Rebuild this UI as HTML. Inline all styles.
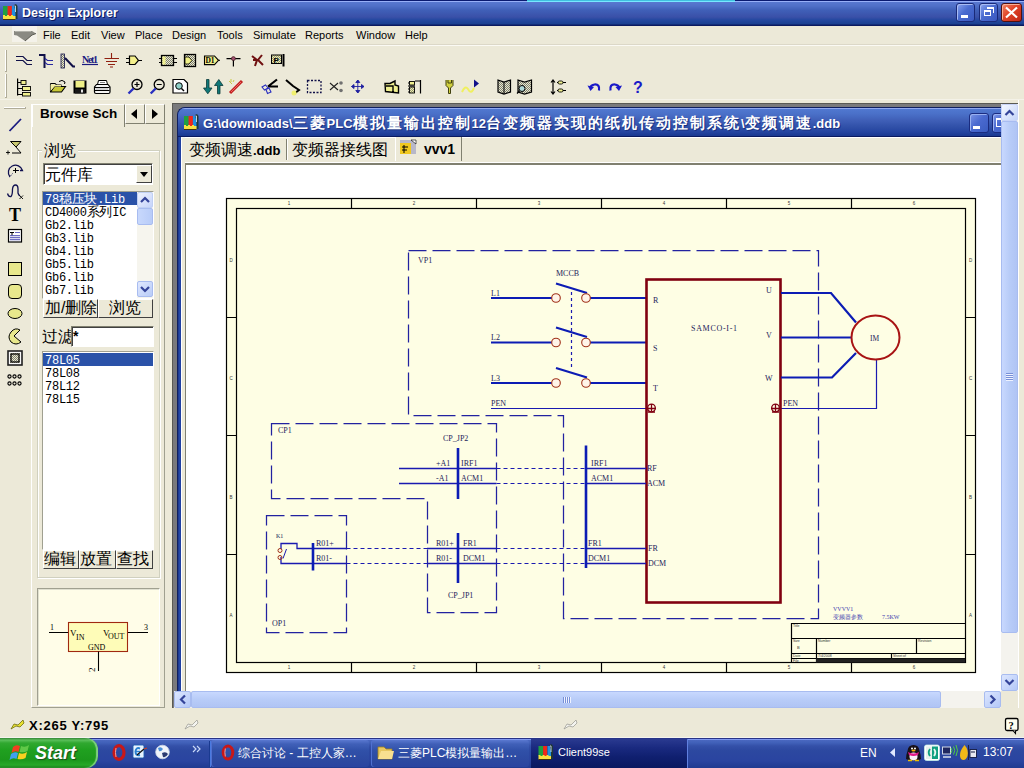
<!DOCTYPE html>
<html><head><meta charset="utf-8">
<style>
*{margin:0;padding:0;box-sizing:border-box}
html,body{width:1024px;height:768px;overflow:hidden;background:#ece9d8;font-family:"Liberation Sans",sans-serif;font-size:11px;color:#000}
.a{position:absolute}
#title{left:0;top:0;width:1024px;height:26px;background:linear-gradient(#0a1a70 0,#0a1a70 1px,#98b0f8 1px,#98b0f8 2px,#5878d0 2px,#5070c8 6px,#4060b8 10px,#3a50a8 17px,#2448a0 20px,#1a4090 24px,#0a1a60 25px,#0a1a60 26px)}
.mi{position:absolute;top:29px;font-size:11px;color:#000}
.cjk{font-family:"Liberation Sans",sans-serif}
.mono{font-family:"Liberation Mono",monospace}
</style></head><body>
<!-- title bar -->
<div id="title" class="a"></div>
<div class="a" style="left:527px;top:0;width:208px;height:2px;background:linear-gradient(#40c0e0 0,#40c0e0 1px,#78e8ff 1px)"></div>
<div class="a" style="left:22px;top:6px;color:#fff;font-size:12.5px;font-weight:bold;text-shadow:1px 1px #0a1860">Design Explorer</div>
<!-- menu -->
<div class="mi" style="left:43px">File</div>
<div class="mi" style="left:71px">Edit</div>
<div class="mi" style="left:101px">View</div>
<div class="mi" style="left:135px">Place</div>
<div class="mi" style="left:172px">Design</div>
<div class="mi" style="left:217px">Tools</div>
<div class="mi" style="left:253px">Simulate</div>
<div class="mi" style="left:305px">Reports</div>
<div class="mi" style="left:356px">Window</div>
<div class="mi" style="left:405px">Help</div>
<!-- ICONS -->
<svg class="a" style="left:0;top:0" width="1024" height="768">
<defs>
<pattern id="hat" width="2" height="2" patternUnits="userSpaceOnUse"><rect width="2" height="2" fill="#e8e8d0"/><rect width="1" height="1" fill="#808070"/><rect x="1" y="1" width="1" height="1" fill="#808070"/></pattern>
<pattern id="hat2" width="2" height="2" patternUnits="userSpaceOnUse"><rect width="2" height="2" fill="#f0f0a0"/><rect width="1" height="1" fill="#909080"/><rect x="1" y="1" width="1" height="1" fill="#909080"/></pattern>
</defs>
<!-- grips -->
<g stroke-width="1">
<path d="M5.5 50V71M5.5 74V97" stroke="#fff"/><path d="M6.5 50V71M6.5 74V97M5 71.5H7M5 97.5H7" stroke="#b0ac98"/>
<path d="M4 107.5H25" stroke="#fff"/><path d="M4 108.5H25M25.5 107V109" stroke="#b0ac98"/>
</g>
<!-- ROW 1 -->
<path d="M16 56.5H23L27 60.5H32M16 60.5H23L27 64.5H32" stroke="#101048" stroke-width="1.2" fill="none"/>
<path d="M39 55H44.5V68" stroke="#101048" stroke-width="2" fill="none"/>
<path d="M45 58.5L47.5 60.5H53M45 62.5L47.5 64.5H53" stroke="#2828a0" stroke-width="1.1" fill="none"/>
<rect x="61" y="54" width="3.5" height="14" fill="url(#hat)" stroke="#101048" stroke-width="0.8"/>
<path d="M65 58L73 66.5H75" stroke="#101048" stroke-width="2" fill="none"/>
<text x="82" y="63" font-family="Liberation Serif,serif" font-weight="bold" font-size="10" fill="#1a1a80" textLength="16">Net1</text>
<path d="M82 64.5H98" stroke="#1a1a80" stroke-width="1.2"/>
<path d="M111.5 53V58.5M104.5 58.5H119M106 61.5H117M108 64.5H115M110 67H113" stroke="#902010" stroke-width="1.1" fill="none"/>
<path d="M126 58.5H129.5M126 62.5H129.5M138.5 60.5H142" stroke="#000" stroke-width="1.1"/>
<path d="M129.5 56H135L138.5 60.5L135 64.5H129.5Z" fill="#f4f08c" stroke="#000" stroke-width="1.2"/>
<path d="M159 58.5H161M159 62.5H161M174 58.5H177M174 62.5H177" stroke="#000" stroke-width="1"/>
<rect x="161.5" y="55.5" width="12" height="10" fill="url(#hat)" stroke="#000" stroke-width="1.3"/>
<rect x="162.5" y="56.5" width="3" height="8" fill="#f0f090"/>
<rect x="184.5" y="54.5" width="11" height="12" fill="url(#hat)" stroke="#000" stroke-width="1.3"/>
<path d="M185 57H189L192 60.5L189 64H185Z" fill="#f0f088" stroke="#000" stroke-width="0.8"/>
<path d="M204.5 56H214.5L218.5 60.3L214.5 64.6H204.5Z" fill="#f4f08c" stroke="#000" stroke-width="1.1"/>
<path d="M218.5 60.3H220" stroke="#000"/>
<text x="205.5" y="63.3" font-family="Liberation Serif,serif" font-weight="bold" font-size="7.5" fill="#000" textLength="9">D1</text>
<path d="M226.5 58.6H240.5M233.4 58.6V66.5" stroke="#000" stroke-width="1.2"/>
<circle cx="233.4" cy="58.6" r="2" fill="#a05070" stroke="#301010" stroke-width="0.6"/>
<path d="M252 56L257 60L255 66M262 55L258 60L263 65M253 60H258" stroke="#701010" stroke-width="2" fill="none"/>
<rect x="271.5" y="55" width="10" height="8.5" fill="url(#hat2)" stroke="#000" stroke-width="1"/>
<text x="273.5" y="62.5" font-family="Liberation Sans,sans-serif" font-weight="bold" font-size="8" fill="#000">P</text>
<path d="M283.5 54V66.5" stroke="#000" stroke-width="2"/>
<!-- ROW 2 -->
<path d="M17.6 78.5V95.5M17.6 82.5H21M17.6 88.5H22M17.6 94.5H22" stroke="#000" stroke-width="1.2"/>
<rect x="21" y="80.5" width="5" height="4" fill="#f0f090" stroke="#000" stroke-width="0.9"/>
<rect x="22.5" y="86.5" width="8" height="4" fill="#f0f090" stroke="#000" stroke-width="0.9"/>
<rect x="22.5" y="92.5" width="8" height="3.5" fill="#f0f090" stroke="#000" stroke-width="0.9"/>
<path d="M50.5 83.5H55L56.5 85H61V87" fill="none" stroke="#000" stroke-width="1.1"/>
<path d="M50.5 83.5V92H61.5L65.5 86.5H54.5L50.5 92" fill="#c8c838" stroke="#000" stroke-width="1.1"/>
<path d="M50.5 84.5V91L54.5 86.5H61V85H56L55 84.5Z" fill="#f4f0a0"/>
<path d="M59 81.5Q62 79 65 82L64.5 84" fill="none" stroke="#000" stroke-width="1"/>
<rect x="73.5" y="80.5" width="13" height="13" fill="#000"/>
<rect x="75.5" y="81" width="9" height="6.5" fill="#f0f088"/>
<rect x="75" y="89" width="10" height="4.5" fill="#181818"/>
<rect x="81" y="89.5" width="2" height="3" fill="#e8e8e8"/>
<path d="M98.5 80.5H106.5L107.5 84.5H97.5Z" fill="#fff" stroke="#000" stroke-width="1"/>
<path d="M100 82.5H105" stroke="#606060" stroke-width="0.8"/>
<path d="M96.5 84.5H108L110 87V92Q110 93.5 108.5 93.5H96Q94.5 93.5 94.5 92V87Z" fill="#f4f4f4" stroke="#000" stroke-width="1.2"/>
<path d="M95 87.5H109.5M95 90.5H109.5" stroke="#000" stroke-width="1"/>
<path d="M96 89H108" stroke="#b0b0b0" stroke-width="1"/>
<g fill="none" stroke="#000" stroke-width="1.3">
<circle cx="137" cy="84.5" r="5"/><circle cx="159.2" cy="84.5" r="5"/>
</g>
<path d="M134.5 84.5H139.5M137 82V87M156.7 84.5H161.7" stroke="#000" stroke-width="1.2"/>
<path d="M133.5 88.5L128.5 93.5M155.7 88.5L150.7 93.5" stroke="#2a30c0" stroke-width="2.4"/>
<path d="M173 79.5H184L187.5 83V93H173Z" fill="#fff" stroke="#000" stroke-width="1.2"/>
<circle cx="179" cy="86" r="3.3" fill="#90d0c8" stroke="#000" stroke-width="1"/>
<path d="M181.5 88.5L184 91" stroke="#000" stroke-width="1.4"/>
<path d="M206.5 79.5H209V88H212L207.8 93.8L203.5 88H206.5Z" fill="#107878" stroke="#0a3a3a" stroke-width="0.8"/>
<path d="M217.5 93.8H220V85.5H223L218.8 79.5L214.5 85.5H217.5Z" fill="#107878" stroke="#0a3a3a" stroke-width="0.8"/>
<path d="M230 93L242 81" stroke="#c02020" stroke-width="3"/><path d="M231 92L241 82" stroke="#f06060" stroke-width="1"/>
<path d="M229 81L232 84M231 79V82M234 80L233 82" stroke="#c0c020" stroke-width="0.8"/>
<path d="M268 86.5L277 79.5M268 86.5H278" stroke="#000" stroke-width="2.2"/>
<path d="M262 87L265.5 85L268 88L264.5 90Z M266 89.5L269 88L271 92L267.5 93.5Z" fill="none" stroke="#2a30c0" stroke-width="1.1"/>
<path d="M286 80L293 86L299 90L295 93" fill="none" stroke="#000" stroke-width="2"/>
<circle cx="294" cy="93" r="2.5" fill="#f0f070"/>
<rect x="307.5" y="80.5" width="13.5" height="12" fill="none" stroke="#101048" stroke-width="1.3" stroke-dasharray="2 1.5"/>
<path d="M330 83L334 86.5L330 90M334 86.5L338 83M334 86.5L338 90" fill="none" stroke="#202020" stroke-width="1.1"/>
<circle cx="341" cy="83" r="1.8" fill="#707070"/><circle cx="341" cy="90.5" r="1.8" fill="#707070"/>
<path d="M351.5 86.5H364M357.8 80V93M351.5 86.5L354 84.5V88.5ZM364 86.5L361.5 84.5V88.5ZM357.8 80L355.8 82.5H359.8ZM357.8 93L355.8 90.5H359.8Z" fill="#2020a0" stroke="#2020a0" stroke-width="0.9"/>
<path d="M385 83.5H390L395 81V85L398.5 86V93L385.5 91.5ZM386 86H393V92" fill="#f0f090" stroke="#000" stroke-width="1.4"/>
<path d="M408 83H415M408 86H415M408 89H415M408 92H415M420.5 80V93.5M415 81H421" stroke="#000" stroke-width="1.2"/>
<rect x="409.5" y="81.5" width="5" height="3.5" fill="#f0f090" stroke="#000" stroke-width="0.9"/>
<rect x="409.5" y="87" width="5" height="6" fill="url(#hat2)" stroke="#000" stroke-width="0.9"/>
<path d="M446 80V85.5L448.5 88V93.5H450.5V88L453 85.5V80M448 80V83H451.5V80" fill="#d0d040" stroke="#404010" stroke-width="1"/>
<path d="M462 92Q465 85 468 89Q471 95 474 88" fill="none" stroke="#f0f060" stroke-width="2"/>
<path d="M474 79.5L479 83.5L474 87.5Z" fill="#10108a"/>
<path d="M498 80L504 82L510.5 80V92L504 94L498 92Z" fill="url(#hat)" stroke="#000" stroke-width="1.2"/>
<path d="M504 82V94" stroke="#000" stroke-width="1"/>
<path d="M518 80L524.5 82L531.5 80V92L524.5 94L518 92Z" fill="url(#hat)" stroke="#000" stroke-width="1.2"/>
<circle cx="522" cy="88.5" r="3" fill="#b0d8d8" stroke="#000" stroke-width="1"/>
<path d="M519.5 91L517 93.5" stroke="#000" stroke-width="1.3"/>
<path d="M553 80.5V93.5M551 82.5L553 80L555 82.5M551 91.5L553 94L555 91.5" fill="none" stroke="#000" stroke-width="1.2"/>
<path d="M557 82.5H566M557 90.5H566" stroke="#000" stroke-width="1"/>
<rect x="558" y="81" width="5" height="3" rx="1.5" fill="#f0f090" stroke="#000" stroke-width="0.9"/>
<rect x="558" y="89" width="5" height="3" rx="1.5" fill="#f0f090" stroke="#000" stroke-width="0.9"/>
<path d="M599 90.5Q600 84 594.5 84.5Q591 85 590 88" fill="none" stroke="#1a1ac8" stroke-width="2.2"/>
<path d="M587.5 85.5L590.5 91L594 87Z" fill="#1a1ac8"/>
<path d="M610.5 90.5Q609.5 84 615 84.5Q618.5 85 619.5 88" fill="none" stroke="#1a1ac8" stroke-width="2.2"/>
<path d="M622 85.5L619 91L615.5 87Z" fill="#1a1ac8"/>
<text x="633" y="93" font-family="Liberation Sans,sans-serif" font-weight="bold" font-size="16" fill="#1a1ac8">?</text>
<!-- LEFT TOOLBAR -->
<path d="M9.5 131L21 119" stroke="#1a1a80" stroke-width="1.8"/>
<path d="M10.5 141.5H21L16 147Z" fill="#c8c870" stroke="#000" stroke-width="1"/>
<path d="M16 147L21 153H12" fill="none" stroke="#000" stroke-width="1"/>
<path d="M6 152.5H10M8 150.5V154.5" stroke="#000" stroke-width="0.9"/>
<path d="M10 177A7.2 7.2 0 1 1 22.5 170.5H20" fill="none" stroke="#101050" stroke-width="1.3"/>
<path d="M12.5 173.5L10.5 176M19 170.5H17.5" fill="none" stroke="#101050" stroke-width="1" stroke-dasharray="1 1"/>
<path d="M13 170.5H18M15.5 168V173" stroke="#000" stroke-width="1"/>
<path d="M7.5 193.5Q8.5 197 11 196.5Q12.5 195 12.5 189Q13 185 15.5 185Q18 185 18 189V193Q18.5 195 20 196" fill="none" stroke="#101050" stroke-width="1.3"/>
<path d="M19.5 195.5L23 199M23 195.5L19.5 199" stroke="#000" stroke-width="0.9"/>
<text x="9" y="220.5" font-family="Liberation Serif,serif" font-weight="bold" font-size="18" fill="#000">T</text>
<rect x="8.5" y="229.5" width="13" height="12.5" fill="#fff" stroke="#000" stroke-width="1.2"/>
<path d="M10 232.5H14M12 232V236" stroke="#000" stroke-width="1"/>
<path d="M15 232.5H20M10 235.5H20M10 237.5H20M10 239.5H20" stroke="#4040b0" stroke-width="0.8"/>
<path d="M11 235V241M13 235V241M15 235V241M17 235V241M19 235V241" stroke="#8080c8" stroke-width="0.6"/>
<rect x="8.5" y="262.5" width="13" height="13" fill="#e8e88c" stroke="#000" stroke-width="1"/>
<rect x="8.5" y="284.5" width="13" height="14" rx="3.5" fill="#e8e88c" stroke="#000" stroke-width="1"/>
<ellipse cx="15" cy="313.5" rx="7" ry="5" fill="#e8e88c" stroke="#000" stroke-width="1"/>
<path d="M21 342Q16 346 11 342Q7 337 11 332Q15 327 20 330L14 336Z" fill="#e8e88c" stroke="#000" stroke-width="1"/>
<rect x="8" y="351" width="14" height="14" fill="#f8f8f8" stroke="#202020" stroke-width="1.6"/>
<rect x="10" y="353" width="10" height="10" fill="url(#hat)"/>
<rect x="11" y="354" width="8" height="8" fill="none" stroke="#000" stroke-width="1.2"/>
<g fill="none" stroke="#000" stroke-width="1.1">
<circle cx="9.5" cy="376.5" r="1.6"/><circle cx="14.5" cy="376.5" r="1.6"/><circle cx="19.5" cy="376.5" r="1.6"/>
<circle cx="9.5" cy="383.5" r="1.6"/><circle cx="14.5" cy="383.5" r="1.6"/><circle cx="19.5" cy="383.5" r="1.6"/>
</g>
<!-- menu system icon -->
<rect x="12" y="26" width="25" height="16" fill="#f4f2ea"/>
<path d="M14 31H32L36 33.5L32 35L25 41L17 35.5L14 35Z" fill="#8a8a82"/>
<path d="M15 31.5H31" stroke="#b0b0a8" stroke-width="1"/>
<path d="M25 41L32 35L36 33.5" fill="none" stroke="#5a5a52" stroke-width="1"/>
</svg>

<!-- toolbar separators -->
<div class="a" style="left:0;top:44px;width:1024px;height:1px;background:#dcd8c8"></div><div class="a" style="left:0;top:45px;width:1024px;height:1px;background:#fbfaf4"></div><div class="a" style="left:0;top:99px;width:1024px;height:1px;background:#f4f2e8"></div>

<!-- left vertical toolbar grip -->

<!-- left panel -->
<div class="a" style="left:31px;top:104px;width:134px;height:604px;border:1px solid #fff;border-right-color:#a0a090;border-bottom-color:#a0a090"></div>
<div class="a" style="left:32px;top:104px;width:93px;height:23px;border-left:1px solid #fff;border-top:1px solid #fff;border-right:1px solid #808070;background:#ece9d8"></div>
<div class="a" style="left:40px;top:106px;font-size:13.5px;font-weight:bold">Browse Sch</div>
<div class="a" style="left:125px;top:104px;width:20px;height:20px;border:1px solid #fff;border-right-color:#808070;border-bottom-color:#808070;background:#ece9d8"></div>
<div class="a" style="left:145px;top:104px;width:20px;height:20px;border:1px solid #fff;border-right-color:#808070;border-bottom-color:#808070;background:#ece9d8"></div>
<svg class="a" style="left:0;top:0" width="1024" height="768">
<path d="M131 114 L137 109 L137 119 Z" fill="#000"/>
<path d="M158 114 L152 109 L152 119 Z" fill="#000"/>
</svg>
<!-- group box -->
<div class="a" style="left:37px;top:150px;width:123px;height:428px;border:1px solid #d0d0bf;box-shadow:inset 1px 1px #fff,1px 1px #fff"></div>
<div class="a cjk" style="left:42px;top:141px;padding:0 2px;background:#ece9d8;font-size:16px">浏览</div>
<!-- combo -->
<div class="a" style="left:43px;top:163px;width:110px;height:22px;background:#fff;border:1px solid #808070;border-right-color:#fff;border-bottom-color:#fff;box-shadow:inset 1px 1px #404040"></div>
<div class="a cjk" style="left:45px;top:165px;font-size:16px">元件库</div>
<div class="a" style="left:136px;top:165px;width:16px;height:18px;background:#ece9d8;border:1px solid #fff;border-right-color:#404040;border-bottom-color:#404040"></div>
<svg class="a" style="left:0;top:0" width="1024" height="768"><path d="M140 172 L148 172 L144 177 Z" fill="#000"/></svg>
<!-- lib list -->
<div class="a" style="left:42px;top:191px;width:112px;height:108px;background:#fff;border:1px solid #a0a090;border-right-color:#fff;border-bottom-color:#fff"></div>
<div class="a" style="left:43px;top:192px;width:94px;height:13px;background:#2a52a8"></div>
<div class="a mono" style="left:45px;top:194px;font-size:12px;line-height:13px;letter-spacing:-0.25px;color:#000;white-space:nowrap">
<span style="color:#fff">78<span style="font-size:12.5px">稳压块</span>.Lib</span><br>CD4000<span style="font-size:12.5px">系列</span>IC<br>Gb2.lib<br>Gb3.lib<br>Gb4.lib<br>Gb5.lib<br>Gb6.lib<br>Gb7.lib</div>
<div class="a" style="left:137px;top:192px;width:16px;height:106px;background:#f6f5ee"></div>
<div class="a" style="left:137px;top:192px;width:16px;height:16px;background:linear-gradient(135deg,#eef2fe,#c6d4fa);border:1px solid #c0d0f4;border-radius:2px"></div>
<div class="a" style="left:137px;top:208px;width:16px;height:17px;background:linear-gradient(90deg,#c8d8fc,#b8ccf8);border:1px solid #a8bcf0;border-radius:2px"></div>
<div class="a" style="left:137px;top:281px;width:16px;height:16px;background:linear-gradient(135deg,#e0e8fe,#b8ccf8);border:1px solid #a8bcf0;border-radius:2px"></div>
<svg class="a" style="left:0;top:0" width="1024" height="768">
<path d="M141 202 L145 198 L149 202" stroke="#34449a" stroke-width="2.2" fill="none"/>
<path d="M141 287 L145 291 L149 287" stroke="#34449a" stroke-width="2.2" fill="none"/>
</svg>
<!-- add/browse buttons -->
<div class="a" style="left:43px;top:299px;width:55px;height:19px;background:#ece9d8;border:1px solid #fff;border-right-color:#404040;border-bottom-color:#404040"></div>
<div class="a" style="left:98px;top:299px;width:55px;height:19px;background:#ece9d8;border:1px solid #fff;border-right-color:#404040;border-bottom-color:#404040"></div>
<div class="a cjk" style="left:45px;top:299px;font-size:16px;line-height:18px">加/删除</div>
<div class="a cjk" style="left:109px;top:299px;font-size:16px;line-height:18px">浏览</div>
<!-- filter -->
<div class="a cjk" style="left:42px;top:327px;font-size:16px">过滤</div>
<div class="a" style="left:71px;top:326px;width:83px;height:21px;background:#fff;border:1px solid #808070;border-right-color:#fff;border-bottom-color:#fff;box-shadow:inset 1px 1px #404040"></div>
<div class="a" style="left:73px;top:328px;font-size:14px;font-weight:bold">*</div>
<!-- comp list -->
<div class="a" style="left:42px;top:351px;width:112px;height:199px;background:#fff;border:1px solid #a0a090;border-right-color:#fff;border-bottom-color:#fff"></div>
<div class="a" style="left:43px;top:353px;width:110px;height:13px;background:#2a52a8"></div>
<div class="a mono" style="left:45px;top:355px;font-size:12px;line-height:13px;letter-spacing:-0.25px;color:#000"><span style="color:#fff">78L05</span><br>78L08<br>78L12<br>78L15</div>
<!-- edit/place/find -->
<div class="a" style="left:43px;top:550px;width:36px;height:19px;background:#ece9d8;border:1px solid #fff;border-right-color:#404040;border-bottom-color:#404040"></div>
<div class="a" style="left:79px;top:550px;width:37px;height:19px;background:#ece9d8;border:1px solid #fff;border-right-color:#404040;border-bottom-color:#404040"></div>
<div class="a" style="left:116px;top:550px;width:37px;height:19px;background:#ece9d8;border:1px solid #fff;border-right-color:#404040;border-bottom-color:#404040"></div>
<div class="a cjk" style="left:44px;top:550px;font-size:16px;line-height:18px">编辑</div>
<div class="a cjk" style="left:80px;top:550px;font-size:16px;line-height:18px">放置</div>
<div class="a cjk" style="left:117px;top:550px;font-size:16px;line-height:18px">查找</div>
<!-- preview -->
<div class="a" style="left:37px;top:588px;width:123px;height:118px;background:#fffde8;border:1px solid #a0a090;border-right-color:#fff;border-bottom-color:#fff;box-shadow:inset 1px 1px #e0e0d0"></div>

<!-- preview component -->
<svg class="a" style="left:0;top:0" width="1024" height="768" font-family="Liberation Serif,serif">
<rect x="68.5" y="622.5" width="59" height="29" fill="#fefcb8" stroke="#a02810" stroke-width="1.1"/>
<path d="M49 632.5H68M128 632.5H148M98.5 651.5V671" stroke="#000" stroke-width="1.1"/>
<g font-size="8" fill="#000">
<text x="50" y="630">1</text><text x="144" y="630">3</text>
<text x="70" y="636" font-size="9">V</text><text x="76" y="640" font-size="8">IN</text>
<text x="103" y="636" font-size="9">V</text><text x="108" y="639" font-size="8">OUT</text>
<text x="88" y="649.5" font-size="8">GND</text>
<text x="95" y="672" transform="rotate(-90 95 672)" font-size="9">2</text>
</g>
</svg>
<!-- MDI client -->
<div class="a" style="left:172px;top:103px;width:846px;height:605px;background:#7a7a7c;border-top:1px solid #5a5a54;border-left:1px solid #5a5a54"></div>
<!-- child window -->
<div class="a" style="left:177px;top:107px;width:824px;height:584px;background:#1e3c9c;border-radius:8px 0 0 0;border-left:1px solid #102060;border-top:1px solid #102060"></div>
<div class="a" style="left:178px;top:108px;width:823px;height:29px;border-radius:7px 0 0 0;background:linear-gradient(#90a8f0 0,#90a8f0 1px,#5078d0 1px,#4a70c8 6px,#4060b8 12px,#3050a8 19px,#2444a0 24px,#1a3890 28px,#0a1a60 28px)"></div>
<div class="a" style="left:178px;top:137px;width:3px;height:554px;background:linear-gradient(90deg,#1a3488,#2448a8 50%,#1e3c9c)"></div>
<div class="a" style="left:181px;top:137px;width:820px;height:554px;background:#ece9d8;border-left:1px solid #fff;border-top:1px solid #f4f4f8"></div>
<div class="a" style="left:203px;top:114px;color:#fff;font-size:13px;font-weight:bold;white-space:nowrap;text-shadow:1px 1px #1a3080">G:\downloads\<span style="font-size:15px;letter-spacing:2px">三菱</span>PLC<span style="font-size:15px;letter-spacing:2px">模拟量输出控制</span>12<span style="font-size:15px;letter-spacing:2px">台变频器实现的纸机传动控制系统</span>\<span style="font-size:15px;letter-spacing:2px">变频调速</span>.ddb</div>
<!-- tabs -->
<div class="a" style="left:185px;top:137px;width:816px;height:1px;background:#fff"></div>
<div class="a cjk" style="left:189px;top:140px;font-size:16px;white-space:nowrap">变频调速<b style="font-size:13px">.ddb</b></div>
<div class="a" style="left:286px;top:139px;width:2px;height:21px;border-left:1px solid #808070;border-right:1px solid #fff"></div>
<div class="a cjk" style="left:292px;top:140px;font-size:16px;white-space:nowrap">变频器接线图</div>
<div class="a" style="left:395px;top:137px;width:67px;height:24px;border-left:1px solid #fff;border-right:1px solid #808070;background:#ece9d8"></div>
<div class="a" style="left:424px;top:141px;font-size:14px;font-weight:bold">vvv1</div>
<div class="a" style="left:185px;top:162px;width:816px;height:3px;border-top:1px solid #fff;border-bottom:2px solid #808070"></div>
<!-- document white area -->
<div class="a" style="left:185px;top:165px;width:816px;height:526px;background:#fff;border-left:1px solid #808070"></div>

<!-- SCHEM -->
<svg class="a" style="left:0;top:0" width="1024" height="768" font-family="Liberation Serif,serif">
<!-- sheet -->
<rect x="226.5" y="198.5" width="749" height="474" fill="#fefee4" stroke="#000" stroke-width="1.2"/>
<rect x="236.5" y="208.5" width="729" height="454" fill="none" stroke="#000" stroke-width="1.2"/>
<g stroke="#000" stroke-width="1.2">
<path d="M351.5 198.5V208.5M476.5 198.5V208.5M601.5 198.5V208.5M726.5 198.5V208.5M851.5 198.5V208.5"/>
<path d="M351.5 662.5V672.5M476.5 662.5V672.5M601.5 662.5V672.5M726.5 662.5V672.5M851.5 662.5V672.5"/>
<path d="M226.5 317.5H236.5M226.5 435.5H236.5M226.5 554.5H236.5M965.5 317.5H975.5M965.5 435.5H975.5M965.5 554.5H975.5"/>
</g>
<g font-size="4.5" fill="#333" font-family="Liberation Sans,sans-serif" text-anchor="middle">
<text x="289" y="205">1</text><text x="414" y="205">2</text><text x="539" y="205">3</text><text x="664" y="205">4</text><text x="789" y="205">5</text><text x="914" y="205">6</text>
<text x="289" y="669">1</text><text x="414" y="669">2</text><text x="539" y="669">3</text><text x="664" y="669">4</text><text x="789" y="669">5</text><text x="914" y="669">6</text>
<text x="231" y="262">D</text><text x="231" y="380">C</text><text x="231" y="499">B</text><text x="231" y="617">A</text>
<text x="970.5" y="262">D</text><text x="970.5" y="380">C</text><text x="970.5" y="499">B</text><text x="970.5" y="617">A</text>
</g>
<!-- dashed boxes -->
<g fill="none" stroke="#2222a0" stroke-width="1.25" stroke-dasharray="18 6">
<path d="M408.5 250.5H818.5V618.5H563.5V415.5H408.5Z"/>
<path d="M271.5 423.5H496.5V612.5H427.5V498.5H271.5Z"/>
<path d="M266.5 515.5H346.5V632.5H266.5Z"/>
</g>
<!-- MCCB -->
<g stroke="#0c1cb4" stroke-width="2.2" fill="none">
<path d="M491 298H552M590 298H646M491 342.5H552M590 342.5H646M491 383H552M590 383H646"/>
<path d="M556 283.5L587 293M556 327.5L587 337M556 368L587 377.5"/>
</g>
<path d="M571.5 292V370" stroke="#1a1ab0" stroke-width="1.2" stroke-dasharray="3 3"/>
<g stroke="#a03018" stroke-width="1.1" fill="#fff4e8">
<circle cx="556" cy="298" r="4.3"/><circle cx="586" cy="298" r="4.3"/>
<circle cx="556" cy="342.5" r="4.3"/><circle cx="586" cy="342.5" r="4.3"/>
<circle cx="556" cy="383" r="4.3"/><circle cx="586" cy="383" r="4.3"/>
</g>
<path d="M491 408.5H646M781 408.5H876.5V360" stroke="#1a1ab0" stroke-width="1.2" fill="none"/>
<!-- inverter box -->
<rect x="646.5" y="279.5" width="134" height="323" fill="none" stroke="#800010" stroke-width="2.6"/>
<!-- motor -->
<g stroke="#0c1cb4" stroke-width="2.2" fill="none">
<path d="M781 293H831L856 322.5M781 337.5H852M781 377.5H832L856 353"/>
</g>
<ellipse cx="875.5" cy="337.5" rx="24" ry="22" fill="none" stroke="#a81414" stroke-width="2"/>
<!-- ground marks -->
<g stroke="#800010" stroke-width="1.3" fill="none">
<path d="M647 408.5H656M651.5 404V411M648 412H655"/><circle cx="651.5" cy="408" r="3.8"/>
<path d="M771 408.5H780M775.5 404V411M772 412H779"/><circle cx="775.5" cy="408" r="3.8"/>
</g>
<!-- CP section wires -->
<g stroke="#1a1ab0" stroke-width="1.3" fill="none">
<path d="M399 468.5H496.5M586 468.5H646M399 483.5H496.5M586 483.5H646"/>
<path d="M427 548.5H496.5M586 548.5H646M427 563.5H496.5M586 563.5H646"/>
<path d="M281 549V543.5H297V548.5H346.5M281 557V563.5H346.5"/>
</g>
<g stroke="#1a1ab0" stroke-width="1.2" fill="none" stroke-dasharray="4 3">
<path d="M496.5 468.5H586M496.5 483.5H586M496.5 548.5H586M496.5 563.5H586M346.5 548.5H427M346.5 563.5H427"/>
</g>
<g stroke="#0c1cb4" stroke-width="2.6">
<path d="M458 448V499M458 533V583M586 445.5V568M313 543V570.5"/>
</g>
<g stroke="#a03018" stroke-width="1" fill="none">
<circle cx="280" cy="550.5" r="2"/><circle cx="280" cy="557.5" r="2"/>
</g>
<path d="M286.5 549L283 558.5" stroke="#1a1ab0" stroke-width="1"/>
<!-- labels -->
<g font-size="8" fill="#1c1c5a">
<text x="418" y="263">VP1</text>
<text x="556" y="276">MCCB</text>
<text x="491" y="295.5">L1</text><text x="491" y="340">L2</text><text x="491" y="380.5">L3</text><text x="491" y="405.5">PEN</text>
<text x="653" y="302.5">R</text><text x="653" y="350.5">S</text><text x="653" y="390.5">T</text>
<text x="766" y="293">U</text><text x="766" y="337.5">V</text><text x="765" y="380.5">W</text>
<text x="691" y="331" textLength="46">SAMCO-I-1</text>
<text x="870" y="341" font-size="7.5">IM</text>
<text x="783" y="405.5">PEN</text>
<text x="278" y="432.5">CP1</text>
<text x="443" y="441">CP_JP2</text>
<text x="436" y="465.5">+A1</text><text x="461" y="465.5">IRF1</text>
<text x="436" y="480.5">-A1</text><text x="461" y="480.5">ACM1</text>
<text x="276" y="538" font-size="6">K1</text>
<text x="316" y="545.5">R01+</text><text x="316" y="561">R01-</text>
<text x="436" y="546">R01+</text><text x="463" y="546">FR1</text>
<text x="436" y="561">R01-</text><text x="463" y="561">DCM1</text>
<text x="448" y="598">CP_JP1</text>
<text x="591" y="466">IRF1</text><text x="591" y="481">ACM1</text>
<text x="588" y="546">FR1</text><text x="588" y="561">DCM1</text>
<text x="647" y="471">RF</text><text x="647" y="486">ACM</text>
<text x="648" y="551">FR</text><text x="648" y="566">DCM</text>
<text x="272" y="626">OP1</text>
</g>
<!-- title block -->
<g stroke="#000" stroke-width="1.2" fill="none">
<path d="M791.5 662.5V623.5H965.5M791.5 638.5H965.5M791.5 653.5H965.5M791.5 658.5H965.5M816.5 638.5V662.5M916.5 638.5V653.5M891.5 653.5V658.5"/>
</g>
<rect x="816" y="658.5" width="149" height="4" fill="#222"/>
<g font-size="3.5" fill="#333" font-family="Liberation Sans,sans-serif">
<text x="793" y="627">Title</text><text x="793" y="642">Size</text><text x="818" y="642">Number</text><text x="918" y="642">Revision</text>
<text x="793" y="657">Date</text><text x="818" y="657">7/4/2008</text><text x="893" y="657">Sheet of</text><text x="793" y="661.5">File</text>
<text x="797" y="649" font-size="4">B</text>
</g>
<text x="833" y="611" font-size="6" fill="#4040b0">VVVV1</text>
<text x="833" y="619" font-size="6" fill="#4040b0">变频器参数</text>
<text x="882" y="619" font-size="6" fill="#4040b0">7.5KW</text>
</svg>

<!-- app icon -->
<svg class="a" style="left:0;top:0" width="1024" height="768">
<g transform="translate(0 0)">
<rect x="3" y="6" width="4.6" height="10" fill="#20a040"/>
<rect x="7.6" y="6" width="4.2" height="10" fill="#f02818"/>
<rect x="12" y="6" width="3.5" height="10" fill="#2090e0"/>
<path d="M14 5L16 4L17.5 6V19H15.5V7Z" fill="#203838"/>
<path d="M14.5 6H15.5V12" stroke="#e8f8ff" stroke-width="0.8"/>
<path d="M3 15H5V16H7V15H9V16H11V15H13V16H15.5V19.5H3Z" fill="#f8e040"/>
<path d="M3 19.5H15.5" stroke="#403010" stroke-width="1"/>
</g>
<!-- child icon -->
<g transform="translate(181 110)">
<rect x="3" y="6" width="4.6" height="10" fill="#20a040"/>
<rect x="7.6" y="6" width="4.2" height="10" fill="#f02818"/>
<rect x="12" y="6" width="3.5" height="10" fill="#2090e0"/>
<path d="M14 5L16 4L17.5 6V19H15.5V7Z" fill="#203838"/>
<path d="M14.5 6H15.5V12" stroke="#e8f8ff" stroke-width="0.8"/>
<path d="M3 15H5V16H7V15H9V16H11V15H13V16H15.5V19.5H3Z" fill="#f8e040"/>
<path d="M3 19.5H15.5" stroke="#403010" stroke-width="1"/>
</g>
<!-- tab icon -->
<rect x="400" y="140" width="16" height="14" fill="#b8b8c8"/>
<rect x="400" y="143" width="11" height="11" fill="#f0c820"/>
<path d="M402 147H408M402 150H407M404 145V153" stroke="#000" stroke-width="1"/>
<path d="M411 140L416 144V140Z" fill="#fff" stroke="#000" stroke-width="0.6"/>
</svg>
<!-- main window buttons -->
<div class="a" style="left:956px;top:3px;width:19px;height:19px;border:1px solid #1a2a78;border-radius:3px;background:linear-gradient(135deg,#8aa4f0,#4a6cd0 45%,#3a58c0);box-shadow:inset 1px 1px #a8bcf4"></div>
<div class="a" style="left:961px;top:15px;width:7px;height:3px;background:#fff"></div>
<div class="a" style="left:979px;top:3px;width:19px;height:19px;border:1px solid #1a2a78;border-radius:3px;background:linear-gradient(135deg,#8aa4f0,#4a6cd0 45%,#3a58c0);box-shadow:inset 1px 1px #a8bcf4"></div>
<div class="a" style="left:984px;top:10px;width:7px;height:6px;border:1px solid #fff;border-top-width:2px"></div>
<div class="a" style="left:987px;top:7px;width:7px;height:6px;border:1px solid #fff;border-top-width:2px;border-left:0;border-bottom:0"></div>
<div class="a" style="left:1001px;top:3px;width:21px;height:19px;border:1px solid #501010;border-radius:3px;background:linear-gradient(135deg,#f08868,#e04428 45%,#c02818);box-shadow:inset 1px 1px #f8b098"></div>
<svg class="a" style="left:0;top:0" width="1024" height="768"><path d="M1006 7.5L1017 17.5M1017 7.5L1006 17.5" stroke="#fff" stroke-width="2.2"/></svg>
<!-- child window buttons -->
<div class="a" style="left:969px;top:113px;width:20px;height:20px;border:1px solid #1a2c80;border-radius:3px;background:linear-gradient(135deg,#7a94e4,#4a6ad0 45%,#3a5cc0);box-shadow:inset 1px 1px #98b0f0"></div>
<div class="a" style="left:973px;top:126px;width:7px;height:3px;background:#fff"></div>
<div class="a" style="left:992px;top:113px;width:20px;height:20px;border:1px solid #1a2c80;border-radius:3px;background:linear-gradient(135deg,#7a94e4,#4a6ad0 45%,#3a5cc0);box-shadow:inset 1px 1px #98b0f0"></div>
<div class="a" style="left:996px;top:118px;width:9px;height:9px;border:1px solid #fff;border-top-width:2px"></div>

<!-- vertical scrollbar -->
<div class="a" style="left:1001px;top:104px;width:17px;height:587px;background:#f4f3ee"></div>
<!-- horizontal scrollbar -->
<div class="a" style="left:174px;top:691px;width:844px;height:17px;background:#f4f3ee"></div>
<!-- v scrollbar parts -->
<div class="a" style="left:1001px;top:104px;width:17px;height:17px;border:1px solid #c8d4f8;border-radius:2px;background:linear-gradient(135deg,#f4f8ff,#c4d4fa)"></div>
<div class="a" style="left:1001px;top:121px;width:17px;height:512px;border:1px solid #a8bcf0;border-radius:2px;background:linear-gradient(90deg,#c8d8fe,#b8ccf8 50%,#b0c4f4)"></div>
<div class="a" style="left:1001px;top:674px;width:17px;height:17px;border:1px solid #a8bcf0;border-radius:2px;background:linear-gradient(135deg,#dce6fe,#b4c8f8)"></div>
<!-- h scrollbar parts -->
<div class="a" style="left:174px;top:691px;width:17px;height:17px;border:1px solid #a8bcf0;border-radius:2px;background:linear-gradient(135deg,#dce6fe,#b4c8f8)"></div>
<div class="a" style="left:191px;top:691px;width:750px;height:17px;border:1px solid #a8bcf0;border-radius:2px;background:linear-gradient(#c8d8fe,#b8ccf8 50%,#b0c4f4)"></div>
<div class="a" style="left:984px;top:691px;width:17px;height:17px;border:1px solid #a8bcf0;border-radius:2px;background:linear-gradient(135deg,#dce6fe,#b4c8f8)"></div>
<div class="a" style="left:1001px;top:691px;width:17px;height:17px;background:#ece9d8"></div>
<svg class="a" style="left:0;top:0" width="1024" height="768">
<path d="M1005.5 115L1009.5 111L1013.5 115" stroke="#34449a" stroke-width="2.2" fill="none"/>
<path d="M1005.5 680L1009.5 684L1013.5 680" stroke="#34449a" stroke-width="2.2" fill="none"/>
<path d="M185 695.5L181 699.5L185 703.5" stroke="#34449a" stroke-width="2.2" fill="none"/>
<path d="M990.5 695.5L994.5 699.5L990.5 703.5" stroke="#34449a" stroke-width="2.2" fill="none"/>
<path d="M563.5 697V703M565.5 697V703M567.5 697V703M569.5 697V703" stroke="#7890d8" stroke-width="1"/><path d="M564.5 697V703M566.5 697V703M568.5 697V703M570.5 697V703" stroke="#eef2ff" stroke-width="1"/>
<path d="M1006 373.5H1013M1006 375.5H1013M1006 377.5H1013M1006 379.5H1013" stroke="#7890d8" stroke-width="1"/><path d="M1006 374.5H1013M1006 376.5H1013M1006 378.5H1013M1006 380.5H1013" stroke="#eef2ff" stroke-width="1"/>
</svg>
<div class="a" style="left:1018px;top:100px;width:6px;height:608px;background:#ece9d8;border-left:1px solid #fff"></div>
<!-- status bar -->
<svg class="a" style="left:0;top:0" width="1024" height="768">
<path d="M11 729L14 724L18 725L23 720L24 723L20 727L16 726Z" fill="#e8e030" stroke="#707010" stroke-width="0.8"/>
<path d="M185 729L188 724L192 725L197 720L198 723L194 727L190 726Z" fill="#f4f4f0" stroke="#a0a098" stroke-width="0.8"/>
<path d="M564 729L567 724L571 725L576 720L577 723L573 727L569 726Z" fill="#f4f4f0" stroke="#a0a098" stroke-width="0.8"/>
<rect x="1005.5" y="718.5" width="12.5" height="12" rx="1.5" fill="#fffff0" stroke="#000" stroke-width="1.3"/>
<path d="M1013 730.5L1015.5 733.5V730.5" fill="#fffff0" stroke="#000" stroke-width="1.1"/>
<text x="1008.5" y="728.5" font-family="Liberation Serif,serif" font-weight="bold" font-size="10.5" fill="#000">?</text>
</svg>
<!-- taskbar -->
<div class="a" style="left:0;top:737px;width:1024px;height:31px;background:linear-gradient(#f4f4ee 0,#f4f4ee 1px,#283488 1px,#283488 2px,#8098f0 2px,#8098f0 3px,#4a68c0 3px,#4060b8 6px,#3450a8 9px,#2c48a0 14px,#2a44a0 24px,#203a90 31px)"></div>
<div class="a" style="left:0;top:738px;width:98px;height:30px;border-radius:0 12px 12px 0;background:linear-gradient(#2a7a2a 0,#5cc05c 2px,#30a830 5px,#20a020 12px,#1c981c 22px,#28a828 27px,#1a801a 30px);box-shadow:inset -2px 0 1px #80d080"></div>
<svg class="a" style="left:0;top:0" width="1024" height="768">
<path d="M13 747Q16 744 20 746L18.5 752Q15 750 11.5 753Z" fill="#f04020"/>
<path d="M21 746Q25 748 29 745L27.5 751Q24 753 19.5 752Z" fill="#60c848"/>
<path d="M11 754Q14.5 751 18 753L16.5 759Q13 757 9.5 760Z" fill="#40a0f0"/>
<path d="M19 753Q23 755 27 752L25.5 758Q22 760 17.5 759Z" fill="#f8d020"/>
</svg>
<div class="a" style="left:35px;top:743px;color:#fff;font-size:18px;font-weight:bold;font-style:italic;text-shadow:1px 1px 1px #1a4a1a">Start</div>
<!-- quick launch -->
<svg class="a" style="left:0;top:0" width="1024" height="768">
<ellipse cx="119" cy="752.5" rx="5" ry="6.8" fill="none" stroke="#c81818" stroke-width="3.2"/>
<path d="M116 748Q115 752.5 116 757" stroke="#f8a0a0" stroke-width="1" fill="none"/>
<rect x="133" y="745" width="11" height="13" rx="1.5" fill="#e8f4ff" stroke="#2060b0" stroke-width="0.9"/>
<path d="M140 748.5Q136 747 135.5 751.5Q135.5 756 140 755" stroke="#2a80d0" stroke-width="2" fill="none"/>
<path d="M135.5 751.5H140" stroke="#2a80d0" stroke-width="1.4"/>
<path d="M137 755L144 749" stroke="#101010" stroke-width="1.3"/><path d="M144 749L147 748" stroke="#d04020" stroke-width="1.2"/>
<circle cx="162.5" cy="752" r="6.8" fill="#f0f4fa" stroke="#d0dce8" stroke-width="0.8"/>
<path d="M158 748Q161 746 163 749Q161 752 159 751Z" fill="#4a90d8"/>
<path d="M162 753Q166 751 168 754Q166 758 163 757Z" fill="#2a3a70"/>
<path d="M193 746L196 749L193 752M197 746L200 749L197 752" stroke="#c8d8f8" stroke-width="1.2" fill="none"/>
</svg>
<div class="a" style="left:209px;top:741px;width:1px;height:26px;background:#1a3a90;box-shadow:1px 0 #4a7ae0"></div>
<div class="a" style="left:211px;top:740px;width:158px;height:27px;border-radius:3px;background:linear-gradient(#5a78d0,#4060b8 15%,#3050a8 40%,#2c48a0 80%,#2a44a0);box-shadow:inset 1px 0 #5070d0"></div>
<div class="a" style="left:371px;top:740px;width:158px;height:27px;border-radius:3px;background:linear-gradient(#5a78d0,#4060b8 15%,#3050a8 40%,#2c48a0 80%,#2a44a0);box-shadow:inset 1px 0 #5070d0"></div>
<div class="a" style="left:531px;top:739px;width:157px;height:29px;background:linear-gradient(#2a3a90,#1a2a80 30%,#102070 60%,#0a1860);border-right:1px solid #6080e0"></div>
<svg class="a" style="left:0;top:0" width="1024" height="768">
<ellipse cx="228" cy="752.5" rx="4.8" ry="6.5" fill="none" stroke="#c81818" stroke-width="3"/><path d="M225.3 748.5Q224.5 752.5 225.3 756.5" stroke="#f8a0a0" stroke-width="1" fill="none"/>
<path d="M378 747H384L386 749H392V759H378Z" fill="#e8c860" stroke="#a08020" stroke-width="0.8"/>
<path d="M378 759L381 751H394L392 759Z" fill="#f8e090"/>
<g transform="translate(535.5 740)">
<rect x="3" y="6" width="4.6" height="10" fill="#20a040"/>
<rect x="7.6" y="6" width="4.2" height="10" fill="#f02818"/>
<rect x="12" y="6" width="3.5" height="10" fill="#2090e0"/>
<path d="M14 5L16 4L17.5 6V19H15.5V7Z" fill="#203838"/>
<path d="M14.5 6H15.5V12" stroke="#e8f8ff" stroke-width="0.8"/>
<path d="M3 15H5V16H7V15H9V16H11V15H13V16H15.5V19.5H3Z" fill="#f8e040"/>
<path d="M3 19.5H15.5" stroke="#403010" stroke-width="1"/>
</g>
</svg>
<div class="a" style="left:238px;top:745px;color:#fff;font-size:12px;white-space:nowrap">综合讨论 - 工控人家…</div>
<div class="a" style="left:398px;top:745px;color:#fff;font-size:12px;white-space:nowrap">三菱PLC模拟量输出…</div>
<div class="a" style="left:558px;top:746px;color:#fff;font-size:11px;white-space:nowrap">Client99se</div>
<!-- tray -->
<div class="a" style="left:860px;top:746px;color:#fff;font-size:12px">EN</div>
<svg class="a" style="left:0;top:0" width="1024" height="768">
<path d="M895 748L890 752.5L895 757Z" fill="#e0e8ff"/>
<path d="M913.5 745Q919 745 919.5 751Q921 755 921 759Q918 761 913.5 761Q909 761 906 759Q906 755 907.5 751Q908 745 913.5 745Z" fill="#181018"/>
<ellipse cx="913.5" cy="756.5" rx="4" ry="4" fill="#f8f0f8"/>
<path d="M908 752Q913.5 755 919 752L918 755Q913.5 757 909 755Z" fill="#e01888"/>
<circle cx="912" cy="748.5" r="1" fill="#fff"/><circle cx="915" cy="748.5" r="1" fill="#fff"/>
<ellipse cx="913.5" cy="750.5" rx="2" ry="1" fill="#f0b000"/>
<path d="M908 760.5H912M915 760.5H919" stroke="#f0c000" stroke-width="1.3"/>
<rect x="924.5" y="745" width="15" height="15.5" rx="2" fill="#fff" stroke="#c8f0e8" stroke-width="0.8"/>
<rect x="926" y="746.5" width="6" height="12.5" fill="#e8f0ec"/>
<rect x="932" y="746.5" width="6" height="12.5" fill="#10a080"/>
<path d="M930 749Q927.5 752.5 930 756" stroke="#10a080" stroke-width="1.8" fill="none"/>
<path d="M934 749Q936.5 752.5 934 756" stroke="#e8f8f0" stroke-width="1.8" fill="none"/>
<rect x="942.5" y="747" width="8" height="7" fill="#202860" stroke="#d0d8e8" stroke-width="1"/>
<path d="M943 757H951" stroke="#d0d8e8" stroke-width="1.6"/>
<path d="M951 748Q953 750.5 951 753M953.5 746.5Q956 750.5 953.5 754.5M956 745Q959 750.5 956 756" stroke="#50d040" stroke-width="1" fill="none"/>
<path d="M964.5 745Q969 750 967.5 756Q966 760 963.5 760Q960.5 760 960 756Q959.5 751 964.5 745Z" fill="#f0b818"/>
<path d="M968.5 745V760" stroke="#202040" stroke-width="1"/>
<rect x="970" y="749.5" width="6.5" height="8" fill="#e8e8f0" stroke="#101840" stroke-width="0.9"/>
<path d="M971 752H975" stroke="#101840" stroke-width="1"/>
</svg>
<div class="a" style="left:983px;top:745px;color:#fff;font-size:12px">13:07</div>

<div class="a" style="left:29px;top:718px;font-size:13px;font-weight:bold;letter-spacing:0.75px">X:265 Y:795</div>
</body></html>
